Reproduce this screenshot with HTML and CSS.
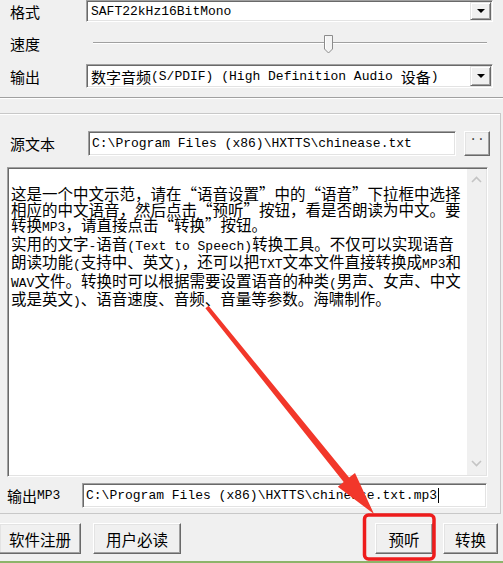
FILE: index.html
```html
<!DOCTYPE html>
<html lang="zh-CN">
<head>
  <meta charset="UTF-8" />
  <title>HXTTS</title>
  <link rel="stylesheet" href="styles.css">
</head>
<body>
  <div class="settings">
    <div class="label">格式</div>
    <div class="combo">
      <span class="combo-value mono">SAFT22kHz16BitMono</span>
      <span class="drop"><i class="tri"></i></span>
    </div>

    <div class="label">速度</div>
    <div class="slider">
      <div class="track"></div>
      <svg class="thumb" width="10" height="19" viewBox="0 0 10 19">
        <path d="M0.5 0.5 H8.5 V14 L4.5 18 L0.5 14 Z" fill="#f4f4f4" stroke="#8c8c8c" />
        <path d="M1.5 1.5 V13.5" stroke="#fff" />
      </svg>
    </div>

    <div class="label">输出</div>
    <div class="combo">
      <span class="combo-value mono"><span class="cjk">数字音频</span>(S/PDIF) (High Definition Audio <span class="cjk">设备</span>)</span>
      <span class="drop"><i class="tri"></i></span>
    </div>
  </div>

  <div class="groove"></div>

  <div class="group">
    <div class="source-row">
      <div class="label">源文本</div>
      <div class="field mono">C:\Program Files (x86)\HXTTS\chinease.txt</div>
      <button class="btn browse">··</button>
    </div>

    <div class="memo">
      <div class="memo-text">
        <div>这是一个中文示范，请在“语音设置”中的“语音”下拉框中选择</div>
        <div>相应的中文语音，然后点击“预听”按钮，看是否朗读为中文。要</div>
        <div>转换<span class="en">MP3</span>，请直接点击“转换”按钮。</div>
        <div>实用的文字<span class="en">-</span>语音<span class="en">(Text to Speech)</span>转换工具。不仅可以实现语音</div>
        <div>朗读功能<span class="en">(</span>支持中、英文<span class="en">)</span>，还可以把<span class="en">TXT</span>文本文件直接转换成<span class="en">MP3</span>和</div>
        <div><span class="en">WAV</span>文件。转换时可以根据需要设置语音的种类<span class="en">(</span>男声、女声、中文</div>
        <div>或是英文<span class="en">)</span>、语音速度、音频、音量等参数。海啸制作。</div>
      </div>
      <div class="scrollbar">
        <svg width="19" height="19" viewBox="0 0 19 19"><polyline points="5,11 9.5,6.5 14,11" fill="none" stroke="#c4c4c4" stroke-width="1.6" /></svg>
        <svg width="19" height="19" viewBox="0 0 19 19"><polyline points="5,7 9.5,11.5 14,7" fill="none" stroke="#c4c4c4" stroke-width="1.6" /></svg>
      </div>
    </div>

    <div class="output-row">
      <div class="label">输出<span class="en">MP3</span></div>
      <div class="field mono">C:\Program Files (x86)\HXTTS\chinease.txt.mp3<span class="caret"></span></div>
    </div>
  </div>

  <div class="actions">
    <button class="btn register">软件注册</button>
    <button class="btn readme">用户必读</button>
    <span class="spacer"></span>
    <button class="btn preview">预听</button>
    <button class="btn convert">转换</button>
  </div>

  <div class="taskbar-line"></div>

  <!-- annotation drawn over the screenshot -->
  <svg class="annotation" width="503" height="563" viewBox="0 0 503 563">
    <polygon points="208.6,305.7 349.1,477.6 355.0,472.9 374,514 337.8,486.7 343.7,482.0 205.4,308.3" fill="#f2372a" />
    <rect x="364.5" y="515" width="69.5" height="44" rx="4" fill="none" stroke="#ee1c1c" stroke-width="3.5" />
  </svg>
</body>
</html>
```

FILE: styles.css
```css
*, *::before, *::after { box-sizing: border-box; }

html, body { margin: 0; }

body {
  position: relative;
  width: 503px;
  height: 563px;
  overflow: hidden;
  background: #f0f0f0;
  color: #000;
  font-family: "Noto Sans CJK SC", sans-serif;
  font-size: 15px;
}

.mono {
  font-family: "Liberation Mono", "Noto Sans CJK SC", monospace;
  font-size: 13px;
}

.mono .cjk {
  font-family: "Noto Sans CJK SC", sans-serif;
  font-size: 15px;
}

.en {
  font-family: "Liberation Mono", monospace;
  font-size: 13px;
}

.label {
  display: flex;
  align-items: center;
  white-space: nowrap;
}

/* top settings */
.settings {
  display: grid;
  grid-template-columns: 86px 407px;
  grid-template-rows: 22px 42px 24px;
}

.settings .label { padding-left: 10px; }

.combo {
  display: flex;
  align-items: stretch;
  background: #fff;
  border: 1px solid;
  border-color: #a0a0a0 #fff #fff #a0a0a0;
  box-shadow: inset 1px 1px #696969, inset -1px -1px #e3e3e3;
  padding: 1px;
}

.combo-value {
  flex: 1;
  display: flex;
  align-items: center;
  padding-left: 3px;
  white-space: pre;
}

.drop {
  width: 21px;
  display: flex;
  align-items: center;
  justify-content: center;
  background: #f0f0f0;
  border: 1px solid;
  border-color: #e3e3e3 #696969 #696969 #e3e3e3;
  box-shadow: inset 1px 1px #fff, inset -1px -1px #a0a0a0;
}

.tri {
  width: 0;
  height: 0;
  border-left: 4px solid transparent;
  border-right: 4px solid transparent;
  border-top: 4px solid #000;
}

.slider {
  position: relative;
}

.track {
  margin: 20px 0 0 7px;
  width: 394px;
  height: 2px;
  border-top: 1px solid #a0a0a0;
  border-bottom: 1px solid #fff;
}

.thumb {
  position: absolute;
  left: 238px;
  top: 13px;
}

.groove {
  margin-top: 9px;
  border-top: 1px solid #a0a0a0;
  border-bottom: 1px solid #fff;
}

/* group box */
.group {
  margin: 14px 0 0 -2px;
  width: 503px;
  padding: 17px 0 5px;
  border: 1px solid #c8c8c8;
  box-shadow: inset 1px 1px #fff;
}

.source-row,
.output-row {
  display: flex;
  height: 25px;
}

.source-row .label {
  width: 89px;
  padding-left: 11px;
}

.field {
  display: flex;
  align-items: center;
  padding-left: 3px;
  white-space: pre;
  background: #fff;
  border: 1px solid;
  border-color: #a0a0a0 #fff #fff #a0a0a0;
  box-shadow: inset 1px 1px #696969, inset -1px -1px #e3e3e3;
}

.source-row .field { width: 368px; }

.btn {
  margin: 0;
  padding: 0;
  font: inherit;
  color: #000;
  background: #f0f0f0;
  border: 1px solid;
  border-color: #fff #696969 #696969 #fff;
  box-shadow: inset -1px -1px #a0a0a0, inset 1px 1px #e3e3e3;
}

.browse {
  width: 26px;
  margin-left: 8px;
  font-family: "Liberation Mono", monospace;
  font-size: 13px;
  line-height: 10px;
  padding-bottom: 8px;
  color: #444;
}

.memo {
  display: flex;
  margin: 11px 0 0 8px;
  width: 481px;
  height: 310px;
  background: #fff;
  border: 1px solid;
  border-color: #a0a0a0 #fff #fff #a0a0a0;
  box-shadow: inset 1px 1px #696969, inset -1px -1px #e3e3e3;
  padding: 1px;
}

.memo-text {
  flex: 1;
  padding: 17px 0 0 2px;
  font-size: 15.5px;
  line-height: 15.5px;
  white-space: nowrap;
  overflow: hidden;
}

.scrollbar {
  width: 19px;
  display: flex;
  flex-direction: column;
  justify-content: space-between;
  background: #f0f0f0;
  padding: 2px 0;
}

.output-row {
  margin-top: 6px;
}

.output-row .label {
  width: 83px;
  padding-left: 8px;
}

.output-row .field {
  width: 405px;
}

.caret {
  display: inline-block;
  width: 1px;
  height: 15px;
  margin-left: 1px;
  background: #000;
}

/* bottom buttons */
.actions {
  display: flex;
  height: 31px;
  margin-top: 9px;
  padding-right: 5px;
}

.actions .btn { font-size: 15.5px; }

.register { width: 82px; margin-left: -1px; }
.readme { width: 88px; margin-left: 12px; }
.spacer { flex: 1; }
.preview { width: 58px; }
.convert { width: 55px; margin-left: 10px; }

.taskbar-line {
  margin-top: 7px;
  height: 2px;
  background: #8db46a;
}

.annotation {
  position: absolute;
  top: 0;
  left: 0;
  pointer-events: none;
}
```
